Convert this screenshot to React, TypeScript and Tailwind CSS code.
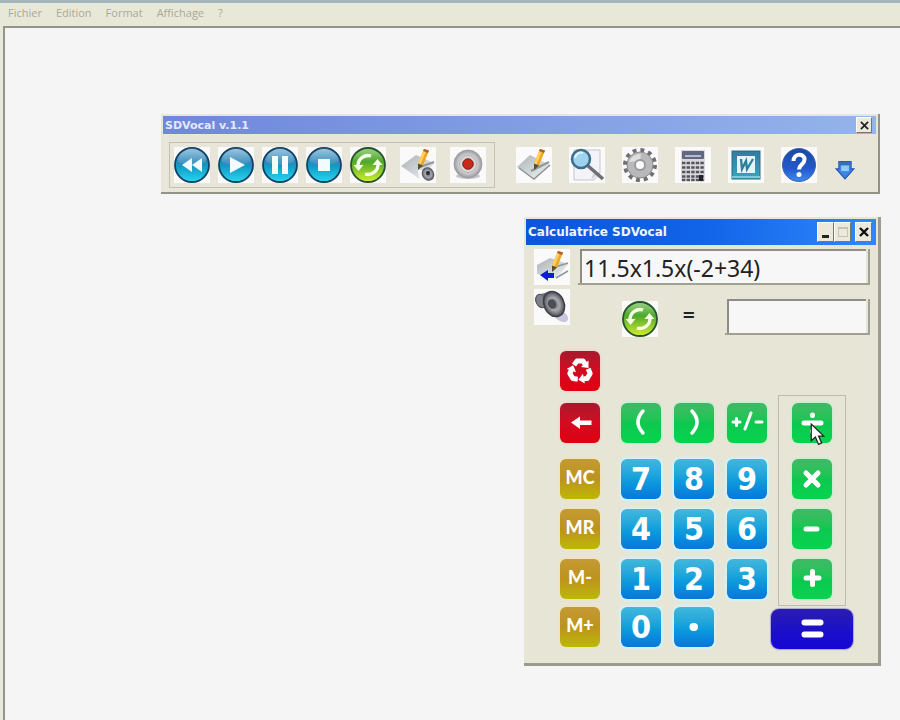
import React, { useState } from "react";
import clsx from "clsx";

const menuItems = ["Fichier", "Edition", "Format", "Affichage", "?"];

interface IconProps {
  children: React.ReactNode;
  className?: string;
}

const Icon = ({ children, className = "size-9" }: IconProps) => (
  <svg viewBox="0 0 36 36" className={className} aria-hidden="true">
    {children}
  </svg>
);

const Gradients = () => (
  <svg className="absolute size-0" aria-hidden="true">
    <defs>
      <linearGradient id="aqua" x1="0" y1="0" x2="0" y2="1">
        <stop offset="0" stopColor="#8fbfdc" />
        <stop offset="0.4" stopColor="#2a86b8" />
        <stop offset="0.55" stopColor="#129cc8" />
        <stop offset="1" stopColor="#27d8ee" />
      </linearGradient>
      <linearGradient id="lime" x1="0" y1="0" x2="0" y2="1">
        <stop offset="0" stopColor="#9fd48a" />
        <stop offset="0.4" stopColor="#4fa92c" />
        <stop offset="1" stopColor="#d4ee2c" />
      </linearGradient>
      <linearGradient id="paper" x1="0" y1="0" x2="1" y2="1">
        <stop offset="0" stopColor="#a9b1b6" />
        <stop offset="1" stopColor="#f1f4f5" />
      </linearGradient>
      <radialGradient id="silver">
        <stop offset="0" stopColor="#ffffff" />
        <stop offset="0.7" stopColor="#c9c9cb" />
        <stop offset="1" stopColor="#97979b" />
      </radialGradient>
      <radialGradient id="cone">
        <stop offset="0" stopColor="#5a5a60" />
        <stop offset="0.5" stopColor="#a9aab0" />
        <stop offset="1" stopColor="#4c4d54" />
      </radialGradient>
      <linearGradient id="help" x1="0" y1="0" x2="0" y2="1">
        <stop offset="0" stopColor="#1c49a4" />
        <stop offset="0.6" stopColor="#2258cc" />
        <stop offset="1" stopColor="#3f8bf0" />
      </linearGradient>
      <linearGradient id="word" x1="0" y1="0" x2="0" y2="1">
        <stop offset="0" stopColor="#2f7ca0" />
        <stop offset="1" stopColor="#3aa5bd" />
      </linearGradient>
    </defs>
  </svg>
);

const AquaIcon = ({ children }: { children: React.ReactNode }) => (
  <Icon>
    <circle cx="18" cy="18" r="17" fill="url(#aqua)" stroke="#123f62" strokeWidth="1.8" />
    <path d="M4 15a14 14 0 0 1 28 0q-14 5-28 0z" fill="#fff" opacity="0.15" />
    <g fill="#f4fbfd">{children}</g>
  </Icon>
);

const RefreshIcon = () => (
  <Icon>
    <circle cx="18" cy="18" r="17" fill="url(#lime)" stroke="#26522c" strokeWidth="1.8" />
    <path d="M8 18a10 10 0 0 1 13-9" fill="none" stroke="#f6ffe8" strokeWidth="3.4" />
    <path d="M28 18a10 10 0 0 1-13 9" fill="none" stroke="#f6ffe8" strokeWidth="3.4" />
    <path d="M3.5 18h10L8.5 24zM32.5 18h-10L27.500 12z" fill="#f6ffe8" />
  </Icon>
);

const Pencil = () => (
  <g>
    <path d="M24 2l5 1.500-6 15-5-2z" fill="#f2a51e" />
    <path d="M24 2l2.500.7-6 15-2.500-1.200z" fill="#ffd063" />
    <path d="M24 2l5 1.500-1 2.500-5-2z" fill="#a9602a" />
    <path d="M18 16.500l5 2-5 4.500z" fill="#53512f" />
  </g>
);

const PageIcon = () => (
  <Icon>
    <path d="M1 20L14 8l20 10-15 13z" fill="url(#paper)" />
    <path d="M3 21l15 11 16-14" fill="none" stroke="#8d9294" strokeWidth="1.5" />
    <path d="M15 24l18-9" stroke="#8f9798" strokeWidth="2" />
    <Pencil />
  </Icon>
);

const PageSoundIcon = () => (
  <Icon>
    <path d="M1 19L16 8l18 8-13 17z" fill="url(#paper)" />
    <path d="M20 20l14-5" stroke="#8f9798" strokeWidth="2" />
    <path d="M18 23h18v13H20z" fill="#fafafa" />
    <Pencil />
    <ellipse cx="28" cy="27" rx="6" ry="7" transform="rotate(-30 28 27)" fill="url(#cone)" />
    <circle cx="28" cy="26" r="2" fill="#2c2c31" />
  </Icon>
);

const PageBackIcon = () => (
  <Icon>
    <path d="M3 16l13-7 18 6-11 14-20-4z" fill="url(#paper)" />
    <path d="M22 29l12-7M18 19l16-5" stroke="#8f9798" strokeWidth="1.500" />
    <Pencil />
    <path d="M6 26l8-5v3h6v5h-6v3z" fill="#0a1ed2" />
  </Icon>
);

const RecordIcon = () => (
  <Icon>
    <ellipse cx="18" cy="29" rx="12" ry="3" fill="#c4c4c6" />
    <circle cx="18" cy="17" r="14" fill="url(#silver)" stroke="#a4a4a8" />
    <circle cx="18" cy="17" r="8.500" fill="#d9d9db" stroke="#b4b4b8" />
    <circle cx="18" cy="17" r="5.300" fill="#c62a18" stroke="#8b1b12" />
  </Icon>
);

const SearchIcon = () => (
  <Icon>
    <path d="M5 3h26v23l-6 7H5z" fill="#f4f4f8" stroke="#c3c4d0" />
    <path d="M31 25l-7 2-2 6" fill="#cfd1da" />
    <path d="M18 18l16 14" stroke="#6d6f74" strokeWidth="3.500" />
    <circle cx="12" cy="12" r="9" fill="#9ed2ee" stroke="#3c6d8c" strokeWidth="2.500" />
    <path d="M6 11a6 6 0 0 1 8-5" stroke="#e2f4fc" strokeWidth="2" fill="none" />
  </Icon>
);

const GearIcon = () => (
  <Icon>
    <circle cx="18" cy="18" r="15" fill="none" stroke="#707073" strokeWidth="4" strokeDasharray="3.900 3.950" />
    <circle cx="18" cy="18" r="13" fill="#b9b9bb" stroke="#8d8d90" />
    <path d="M7 15a11.500 11.500 0 0 1 12-8l-1 7z" fill="#dededf" />
    <circle cx="18" cy="18" r="6" fill="#9a9a9d" />
    <circle cx="18" cy="18" r="4" fill="#fafafa" />
  </Icon>
);

const CalculatorIcon = () => (
  <Icon>
    <path d="M6 3h24v31H6z" fill="#d9d7dc" />
    <rect x="7" y="4" width="22" height="8" rx="1" fill="#63677d" />
    <path d="M10 9h16" stroke="#b5bbd4" strokeWidth="2" />
    <path
      d="M7 16h23M7 20.500h23M7 25h23M7 29.500h23M7 33h23"
      stroke="#55545c"
      strokeWidth="2.500"
      strokeDasharray="3.400 1.200"
    />
    <path d="M24 28h4v6h-4z" fill="#222227" />
  </Icon>
);

const WordIcon = () => (
  <Icon>
    <rect x="4" y="4" width="28" height="28" fill="url(#word)" stroke="#276e8a" />
    <path d="M9 9h18v17H9z" fill="#e3f4f8" />
    <path d="M13 12l1 10 4-8 1 8 6-10" fill="none" stroke="#2b7f9f" strokeWidth="2.300" />
    <path d="M4 30h28" stroke="#79ccd9" strokeWidth="2" />
  </Icon>
);

const HelpIcon = () => (
  <Icon>
    <circle cx="18" cy="18" r="16.500" fill="url(#help)" stroke="#3e63a8" />
    <path
      d="M12.500 14c0-8 11-8 11-1.500 0 5-5.500 5-5.500 10"
      fill="none"
      stroke="#fff"
      strokeWidth="4"
    />
    <circle cx="18" cy="27.500" r="2.500" fill="#fff" />
  </Icon>
);

const DownIcon = () => (
  <Icon className="size-5">
    <path d="M7 3h22v13h5L18 34 2 16h5z" fill="#3f83e4" stroke="#2856b4" strokeWidth="2" />
    <path d="M7 3h22v6H7z" fill="#3c6cb4" />
    <path d="M11 10h14v10H11z" fill="#8accff" />
  </Icon>
);

const SpeakerIcon = () => (
  <Icon>
    <ellipse cx="27" cy="27" rx="8" ry="5" transform="rotate(35 27 27)" fill="#c9c7e0" />
    <ellipse cx="7" cy="12" rx="5" ry="7" transform="rotate(-25 7 12)" fill="#7f8088" stroke="#45464d" />
    <path d="M7 5l11-3 11 24-11 2z" fill="#6c6d76" />
    <ellipse cx="20" cy="15" rx="10" ry="13" transform="rotate(-25 20 15)" fill="url(#cone)" stroke="#3e3f46" strokeWidth="1.500" />
    <ellipse cx="18" cy="15" rx="4" ry="5" transform="rotate(-25 18 15)" fill="#4c4d55" />
  </Icon>
);

const playback = [
  { label: "Retour", icon: <AquaIcon><path d="M18 11v14L8 18zM28 11v14l-10-7z" /></AquaIcon> },
  { label: "Lecture", icon: <AquaIcon><path d="M12 10l15 8-15 8z" /></AquaIcon> },
  { label: "Pause", icon: <AquaIcon><path d="M10 9h6v18h-6zM20 9h6v18h-6z" /></AquaIcon> },
  { label: "Arrêt", icon: <AquaIcon><path d="M12 12h12v12H12z" /></AquaIcon> },
  { label: "Actualiser", icon: <RefreshIcon /> },
  { label: "Lire la page", icon: <PageSoundIcon /> },
  { label: "Enregistrer", icon: <RecordIcon /> },
];

const tools = [
  { label: "Éditer", icon: <PageIcon /> },
  { label: "Rechercher", icon: <SearchIcon /> },
  { label: "Options", icon: <GearIcon /> },
  { label: "Calculatrice", icon: <CalculatorIcon /> },
  { label: "Word", icon: <WordIcon /> },
  { label: "Aide", icon: <HelpIcon /> },
];

interface TileProps {
  label: string;
  icon: React.ReactNode;
}

const Tile = ({ label, icon }: TileProps) => (
  <button type="button" aria-label={label} className="size-9 bg-[#fafafa]">
    {icon}
  </button>
);

const tones = {
  red: "from-[#a8182c] via-[#d40a20] to-[#e00010] shadow-[0_0_2px_1px_#f6d2cb]",
  gold: "from-[#c49a34] via-[#bd931c] to-[#bcb800] shadow-[0_0_2px_1px_#f3e4b8]",
  green: "from-[#3fb867] via-[#0cc850] to-[#06d44c] shadow-[0_0_2px_1px_#c0f2cb]",
  blue: "from-[#41b8dc] via-[#119fdc] to-[#0b76dc] shadow-[0_0_2px_2px_#d5f2f6]",
};

interface KeyProps {
  tone: keyof typeof tones;
  label: string;
  children: React.ReactNode;
  onClick?: () => void;
}

const Key = ({ tone, label, children, onClick }: KeyProps) => (
  <button
    type="button"
    aria-label={label}
    onClick={onClick}
    className={clsx(
      "relative flex size-10 items-center justify-center rounded-md bg-linear-to-b leading-none text-white",
      tones[tone],
    )}
  >
    {children}
  </button>
);

// symbols of the green and red keys, drawn on a 40 x 40 box
const Glyph = ({ d, width = 5 }: { d: string; width?: number }) => (
  <svg viewBox="0 0 40 40" className="size-10" aria-hidden="true">
    <path d={d} fill="none" stroke="#fff" strokeWidth={width} strokeLinecap="round" />
  </svg>
);

const RecycleGlyph = () => (
  <svg viewBox="0 0 40 40" className="size-10" aria-hidden="true">
    {[0, 120, 240].map((angle) => (
      <g key={angle} transform={`rotate(${angle} 20 20)`}>
        <path d="M14 14l3-4h6l2 3" fill="none" stroke="#fff" strokeWidth="5" strokeLinejoin="round" />
        <path d="M21 16l7.500 1 0-7.500z" fill="#fff" />
      </g>
    ))}
  </svg>
);

const Pointer = () => (
  <svg viewBox="0 0 14 22" className="absolute left-[18px] top-5 z-10 h-[23px] w-[15px]" aria-hidden="true">
    <path d="M1 1v16l4-3.500 3 7 3-1.500-3-6.500h5z" fill="#fff" stroke="#222" strokeWidth="1.200" />
  </svg>
);

const digitRows = [
  ["7", "8", "9"],
  ["4", "5", "6"],
  ["1", "2", "3"],
];

const memoryKeys = ["MC", "MR", "M-", "M+"];

const captionButton =
  "flex h-5 w-[17px] items-center justify-center border border-[#fff] border-r-[#77776d] border-b-[#77776d] bg-[#ece9dc]";

const Toolbar = () => (
  <section className="absolute top-[114px] right-5 left-[161px] border-r-2 border-b-2 border-[#929288] bg-[#e7e6d8] pt-0.5 pr-0.5 pl-0.5">
    <header className="flex h-[18px] items-center justify-between bg-linear-to-r from-[#6f87dc] to-[#94b4ea] pr-1 pl-0.5">
      <h2 className="pt-0.5 font-['DejaVu_Sans',sans-serif] text-[11px] font-bold text-[#e3e9fb]">
        SDVocal v.1.1
      </h2>
      <button
        type="button"
        aria-label="Fermer"
        className="flex size-4 items-center justify-center border border-[#fff] border-r-[#77776d] border-b-[#77776d] bg-[#ece9dc]"
      >
        <svg viewBox="0 0 10 10" className="size-[9px]" aria-hidden="true">
          <path d="M1 1l8 8M9 1L1 9" stroke="#222" strokeWidth="2" />
        </svg>
      </button>
    </header>
    <div className="flex items-center pt-2 pb-1 pl-1.5">
      <div className="grid grid-cols-[repeat(5,44px)_56px_44px] justify-items-center border border-[#c3c2b3] py-1 pr-1">
        {playback.map((item) => (
          <Tile key={item.label} {...item} />
        ))}
      </div>
      <div className="ml-3 grid grid-cols-[repeat(6,53px)_40px] items-center justify-items-center">
        {tools.map((item) => (
          <Tile key={item.label} {...item} />
        ))}
        <button type="button" aria-label="Réduire la barre" className="pt-2.5">
          <DownIcon />
        </button>
      </div>
    </div>
  </section>
);

const Calculator = () => {
  const [expression, setExpression] = useState("11.5x1.5x(-2+34)");
  const [result, setResult] = useState("");

  const add = (text: string) => setExpression((value) => value + text);

  return (
    <section className="absolute top-[217px] right-[19px] w-[357px] border-r-[3px] border-b-[3px] border-[#9b9b91] bg-[#e6e5d6] pt-0.5 pr-0.5 pb-3.5 pl-0.5">
      <header className="flex h-[26px] items-center bg-linear-to-r from-[#0a56dc] via-[#1163e8] to-[#2f88fb] pr-1 pl-0.5">
        <h2 className="mr-auto font-['DejaVu_Sans',sans-serif] text-[12px] font-bold text-[#f0f5ff]">
          Calculatrice SDVocal
        </h2>
        <button type="button" aria-label="Réduire" className={captionButton}>
          <span className="mt-2 h-[3px] w-[7px] bg-[#222]" />
        </button>
        <button type="button" aria-label="Agrandir" className={captionButton}>
          <span className="h-[10px] w-[10px] border border-t-2 border-[#c6c3b2]" />
        </button>
        <button type="button" aria-label="Fermer" className={clsx(captionButton, "ml-1")}>
          <svg viewBox="0 0 10 10" className="size-[10px]" aria-hidden="true">
            <path d="M1 1l8 8M9 1L1 9" stroke="#111" strokeWidth="2.400" />
          </svg>
        </button>
      </header>

      <div className="flex gap-2 pt-1 pr-1.5 pl-2">
        <div className="flex flex-col gap-1">
          <Tile label="Renvoyer dans la page" icon={<PageBackIcon />} />
          <Tile label="Lire le calcul" icon={<SpeakerIcon />} />
        </div>
        <div className="flex grow flex-col gap-3.5">
          <div className="border-r-2 border-b-2 border-[#a1a095] pr-0.5 pl-0.5">
            <input
              aria-label="Calcul"
              value={expression}
              onChange={(e) => setExpression(e.target.value)}
              className="block h-[34px] w-full border-t-2 border-l-2 border-[#8e8d83] bg-[#f7f7f7] pt-0.5 pl-0.5 font-['Noto_Sans',sans-serif] text-[23px] text-[#222] outline-none"
            />
          </div>
          <div className="flex items-start">
            <div className="ml-11 pt-0.5">
              <Tile label="Recalculer" icon={<RefreshIcon />} />
            </div>
            <span className="ml-6 pt-1 font-['DejaVu_Sans_Condensed','DejaVu_Sans',sans-serif] text-[18px] font-bold leading-6 text-[#222]">
              =
            </span>
            <div className="ml-auto w-[145px] border-r-2 border-b-2 border-[#a1a095] pr-0.5 pl-0.5">
              <input
                aria-label="Résultat"
                value={result}
                onChange={(e) => setResult(e.target.value)}
                className="block h-[34px] w-full border-t-2 border-l-2 border-[#8e8d83] bg-[#f7f7f7] pt-0.5 pl-0.5 font-['Noto_Sans',sans-serif] text-[23px] text-[#222] outline-none"
              />
            </div>
          </div>
        </div>
      </div>

      <div className="flex pt-2 pl-[34px]">
        <div className="grid grid-rows-[52px_56px_50px_50px_48px_40px]">
          <Key tone="red" label="Tout effacer" onClick={() => setExpression("")}>
            <RecycleGlyph />
          </Key>
          <Key tone="red" label="Effacer" onClick={() => setExpression(expression.slice(0, -1))}>
            <svg viewBox="0 0 40 40" className="size-10" aria-hidden="true">
              <path d="M11 19.500l9-6v4h11.500v4.500H20v4z" fill="#fff" />
            </svg>
          </Key>
          {memoryKeys.map((name) => (
            <Key key={name} tone="gold" label={name}>
              <span className="pb-1 font-[Lato,sans-serif] text-[18px] font-black">{name}</span>
            </Key>
          ))}
        </div>

        <div className="mt-[52px] ml-[21px] grid grid-cols-[repeat(3,40px)] grid-rows-[56px_50px_50px_48px_40px] gap-x-[13px]">
          <Key tone="green" label="(" onClick={() => add("(")}>
            <Glyph d="M22 8q-10 11 0 22" width={3.5} />
          </Key>
          <Key tone="green" label=")" onClick={() => add(")")}>
            <Glyph d="M18 8q10 11 0 22" width={3.5} />
          </Key>
          <Key tone="green" label="+/-">
            <Glyph d="M6 19h7M9.500 15.500v7M18 26l6-16M29 19h6" width={3} />
          </Key>
          {digitRows.flat().concat("0").map((digit) => (
            <Key key={digit} tone="blue" label={digit} onClick={() => add(digit)}>
              <span className="font-['DejaVu_Sans_Condensed','DejaVu_Sans',sans-serif] text-[32px] font-bold">
                {digit}
              </span>
            </Key>
          ))}
          <Key tone="blue" label="." onClick={() => add(".")}>
            <Glyph d="M19.500 20h.5" width={8} />
          </Key>
        </div>

        <div className="mt-11 ml-1 flex w-[82px] flex-col items-center gap-[3px]">
          <div className="grid w-[68px] grid-rows-[56px_50px_50px_46px] justify-center border border-[#bdbcae] pt-[7px]">
            <Key tone="green" label="÷" onClick={() => add("/")}>
              <Glyph d="M12 20h17M20.500 12v.5M20.500 28v.5" />
              <Pointer />
            </Key>
            <Key tone="green" label="×" onClick={() => add("x")}>
              <Glyph d="M14 14l12 12M26 14l-12 12" />
            </Key>
            <Key tone="green" label="-" onClick={() => add("-")}>
              <Glyph d="M14 20h11" />
            </Key>
            <Key tone="green" label="+" onClick={() => add("+")}>
              <Glyph d="M14 19h13M20.500 12.500v13" />
            </Key>
          </div>
          <button
            type="button"
            aria-label="="
            className="flex h-10 w-full items-center justify-center rounded-lg bg-linear-to-b from-[#2a1cae] via-[#1c10c8] to-[#1606d6] shadow-[0_0_1px_1px_#aaa0dc]"
          >
            <Glyph d="M12.500 13.500h16M12.500 25.500h16" width={6} />
          </button>
        </div>
      </div>
    </section>
  );
};

export default function App() {
  return (
    <div className="relative flex min-h-screen flex-col overflow-hidden bg-[#e7e8d8] font-['Open_Sans',sans-serif]">
      <Gradients />
      <div className="h-[3px] bg-[#a6b3ba]" />
      <nav className="flex h-[23px] items-center gap-3.5 border-t border-[#e2ebec] pb-1 pl-2">
        {menuItems.map((item) => (
          <button key={item} type="button" className="text-[11px] leading-4 text-[#a9a996]">
            {item}
          </button>
        ))}
      </nav>
      <main className="ml-[3px] grow border-t-2 border-l-2 border-[#93948a] bg-[#f5f5f5]" />
      <Toolbar />
      <Calculator />
    </div>
  );
}
